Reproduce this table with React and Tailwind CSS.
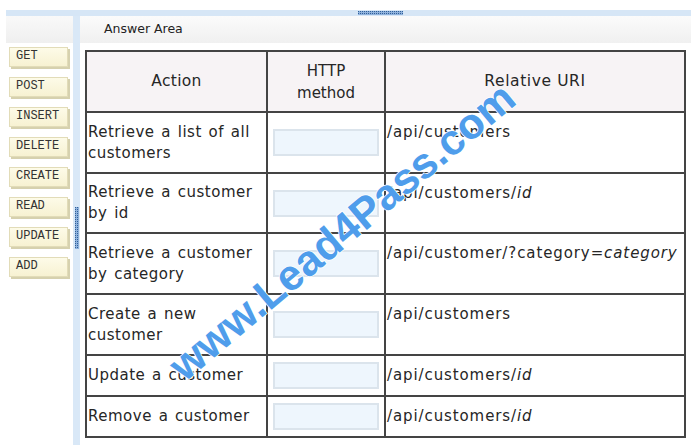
import React from "react";

const BTNS = ["GET", "POST", "INSERT", "DELETE", "CREATE", "READ", "UPDATE", "ADD"];

function Grip({ w, h }) {
  return (
    <svg width={w} height={h} className="block">
      <defs>
        <pattern id={`g${w}${h}`} width="2" height="2" patternUnits="userSpaceOnUse">
          <rect width="1" height="1" fill="#2f5f9a" />
        </pattern>
      </defs>
      <rect width={w} height={h} fill="#8fb2dc" />
      <rect width={w} height={h} fill={`url(#g${w}${h})`} />
    </svg>
  );
}

function Box() {
  return (
    <div className="mx-auto w-[106px] h-[27px] border-2 border-[#dbe4ec] bg-[#eef6fd]" />
  );
}

const rows = [
  { a: ["Retrieve a list of all", "customers"], u: <>/api/customers</>, h: 61 },
  { a: ["Retrieve a customer", "by id"], u: <>/api/customers/<i>id</i></>, h: 60 },
  { a: ["Retrieve a customer", "by category"], u: <>/api/customer/?category=<i>category</i></>, h: 61 },
  { a: ["Create a new", "customer"], u: <>/api/customers</>, h: 61 },
  { a: ["Update a customer"], u: <>/api/customers/<i>id</i></>, h: 41 },
  { a: ["Remove a customer"], u: <>/api/customers/<i>id</i></>, h: 41 },
];

export default function App() {
  return (
    <div className="relative w-[691px] h-[445px] overflow-hidden bg-white text-[#262626]" style={{ fontFamily: '"DejaVu Sans", "Open Sans", sans-serif' }}>
      <div className="h-[10px]" />
      <div className="ml-[6px] h-[6px] bg-[#d6e6f6] flex items-start">
        <div className="ml-[352px] mt-[1px]"><Grip w={45} h={4} /></div>
      </div>
      <div className="flex h-[429px]">
        <div className="ml-[6px] w-[67px] flex flex-col">
          <div className="h-[27px] bg-gradient-to-b from-[#f9f9f9] to-[#efefef]" />
          <div className="flex flex-col gap-[10px] mt-[4px] ml-[3px]">
            {BTNS.map((b) => (
              <div
                key={b}
                className="w-[59px] h-[20px] bg-gradient-to-b from-[#fdfbe8] to-[#f7f2d2] border border-[#e2dcb8] shadow-[2px_2px_0_#d6d1ae] pl-[6px] pt-[1px] text-[12px] leading-[14px] text-[#333]"
                style={{ fontFamily: '"Liberation Mono", monospace' }}
              >
                {b}
              </div>
            ))}
          </div>
        </div>
        <div className="w-[7px] bg-[#d9e8f7] flex flex-col items-center">
          <div className="mt-[191px]"><Grip w={4} h={42} /></div>
        </div>
        <div className="flex-1 flex flex-col">
          <div className="h-[27px] bg-gradient-to-b from-[#fbfbfb] to-[#f0f0f0] pl-[24px] flex items-center text-[12.5px] text-[#222]">
            Answer Area
          </div>
          <table className="mt-[7px] ml-[5px] w-[599px] border-collapse border-2 border-[#444] text-[15px] leading-[21px] table-fixed">
            <colgroup>
              <col className="w-[181px]" />
              <col className="w-[118px]" />
              <col className="w-[300px]" />
            </colgroup>
            <thead>
              <tr className="h-[61px] bg-[#f7f3f5]">
                <th className="border-2 border-[#444] font-normal text-[15.5px] tracking-[0.3px]">Action</th>
                <th className="border-2 border-[#444] font-normal text-[15px] leading-[22px]">HTTP<br />method</th>
                <th className="border-2 border-[#444] font-normal text-[15.5px] tracking-[0.6px]">Relative URI</th>
              </tr>
            </thead>
            <tbody>
              {rows.map((r, i) => (
                <tr key={i} style={{ height: r.h }}>
                  <td className="border-2 border-[#444] pl-[1px] align-middle tracking-[0.5px] [word-spacing:1.5px] whitespace-nowrap">
                    {r.a.map((l, j) => (<div key={j}>{l}</div>))}
                  </td>
                  <td className="border-2 border-[#444] align-middle"><Box /></td>
                  <td className="border-2 border-[#444] align-top pl-[1px] pt-[9px] whitespace-nowrap tracking-[0.9px]">{r.u}</td>
                </tr>
              ))}
            </tbody>
          </table>
        </div>
      </div>
      <div
        className="absolute left-[122px] top-[210px] w-[440px] text-center text-[43px] font-bold leading-none text-[#4f9deb] rotate-[-40deg] pointer-events-none"
        style={{ fontFamily: '"Liberation Sans", Arial, sans-serif', WebkitTextStroke: "1.5px #ffffff", paintOrder: "stroke fill" }}
      >
        www.Lead4Pass.com
      </div>
    </div>
  );
}
